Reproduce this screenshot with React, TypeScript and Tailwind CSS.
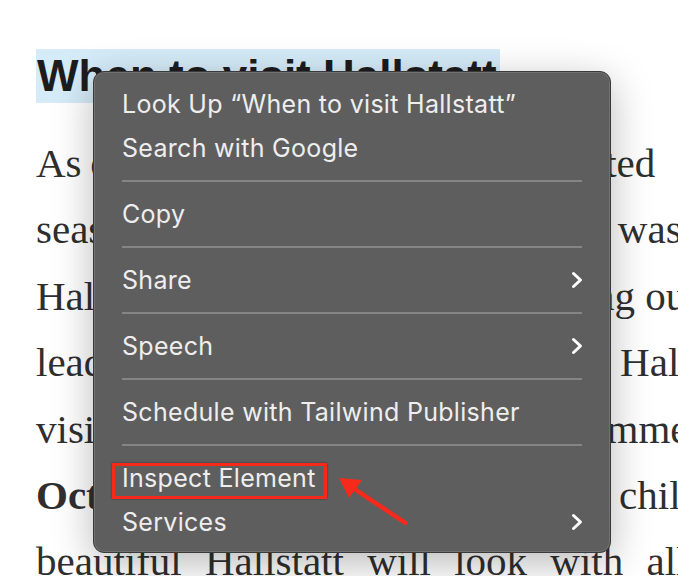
import React from "react";

// word-spacing per line stands in for the justified paragraph of the original page
const bodyLines: { text: React.ReactNode; spacing: string }[] = [
  { text: "As one of the most famous and visited", spacing: "[word-spacing:-1.5px]" },
  { text: "season, the small village in Austria was packed, and", spacing: "" },
  { text: "Hallstatt was full of tourists, making our visit", spacing: "" },
  { text: "leading to vast crowds of people in Hallstatt's", spacing: "" },
  { text: "visiting Hallstatt outside the hot summer. From", spacing: "" },
  {
    text: (
      <>
        <b>October</b> is great, as the weather is chilly
      </>
    ),
    spacing: "[word-spacing:1px]",
  },
  { text: "beautiful Hallstatt will look with all its", spacing: "[word-spacing:13px]" },
];

type Item = { label: string; submenu?: boolean; sepAfter?: boolean; highlight?: boolean };

const items: Item[] = [
  { label: "Look Up \u201CWhen to visit Hallstatt\u201D" },
  { label: "Search with Google", sepAfter: true },
  { label: "Copy", sepAfter: true },
  { label: "Share", submenu: true, sepAfter: true },
  { label: "Speech", submenu: true, sepAfter: true },
  { label: "Schedule with Tailwind Publisher", sepAfter: true },
  { label: "Inspect Element", highlight: true },
  { label: "Services", submenu: true },
];

function Chevron() {
  return (
    <svg width="12" height="18" viewBox="0 0 12 18" fill="none" className="mr-[-1px]">
      <path d="M2.5 2.5 L9.5 9 L2.5 15.5" stroke="white" strokeWidth="3" strokeLinecap="round" strokeLinejoin="round" />
    </svg>
  );
}

export default function App() {
  return (
    <div className="relative h-[576px] w-[678px] overflow-hidden bg-white">
      <article className="pl-[36px] pt-[49px]">
        <h1 className="font-['Liberation_Sans',Arial,sans-serif] text-[44px] font-bold leading-[54px] text-[#1c1c1e]">
          <span className="inline-block bg-[#d5ebf8] pl-[1px] pr-[3px]">When to visit Hallstatt</span>
        </h1>
        <p className="mt-[27px] font-['Liberation_Serif','Times_New_Roman',serif] text-[41px] leading-[66.4px] text-[#2f2f2f]">
          {bodyLines.map((line, i) => (
            <span key={i} className={`block whitespace-nowrap ${line.spacing}`}>
              {line.text}
            </span>
          ))}
        </p>
      </article>

      {/* context menu */}
      <div className="absolute left-[93px] top-[71px] w-[518px] rounded-[11px] border border-[#3a3a3a] bg-[#5e5e5e] px-[28px] pb-[8px] pt-[10px] font-['Inter','Liberation_Sans',sans-serif] text-[25px] tracking-[0.012em] text-[#eeeeee] shadow-[0_10px_40px_rgba(0,0,0,0.28),inset_0_0_0_1px_rgba(255,255,255,0.12)]">
        {items.map((item) => (
          <div key={item.label}>
            <div className="flex h-[44px] items-center justify-between">
              <span className="relative block h-[30px] leading-[30px]">
                {item.label}
                {item.highlight && (
                  <span className="absolute left-[-10px] right-[-11px] top-0 bottom-[-6px] border-[3px] border-[#f62a1a] shadow-[0_0_2px_rgba(0,0,0,0.4)]" />
                )}
              </span>
              {item.submenu && <Chevron />}
            </div>
            {item.sepAfter && (
              <div className="flex h-[22px] items-center">
                <div className="h-[2px] w-full bg-[#858585]" />
              </div>
            )}
          </div>
        ))}
      </div>

      {/* annotation arrow */}
      <svg className="absolute left-0 top-0" width="678" height="576" viewBox="0 0 678 576" fill="none">
        <line x1="407" y1="524" x2="350" y2="486" stroke="#f62a1a" strokeWidth="4.5" />
        <polygon points="339,478 349,498 362,480" fill="#f62a1a" />
      </svg>
    </div>
  );
}
